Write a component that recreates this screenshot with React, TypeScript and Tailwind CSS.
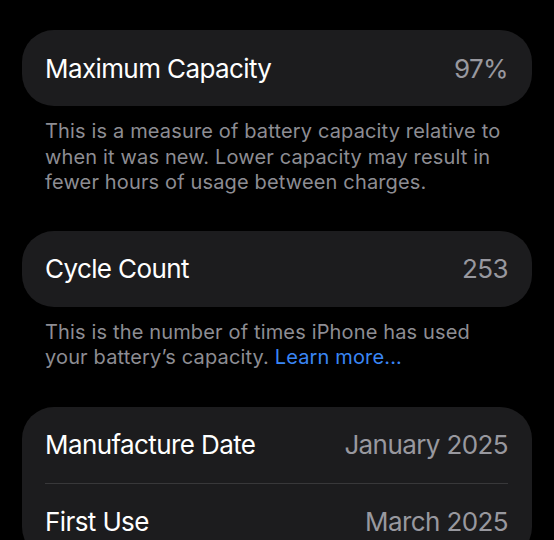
const rows = [
  { label: 'Manufacture Date', value: 'January 2025' },
  { label: 'First Use', value: 'March 2025' },
];

function Card({ label, value }: { label: string; value: string }) {
  return (
    <div className="h-[76px] rounded-[32px] bg-[#1c1c1e] flex items-center justify-between pl-[23px] pr-[24px]">
      <span className="text-[26px] text-white tracking-[-0.6px]">{label}</span>
      <span className="text-[26px] text-[#98989f] tracking-[-0.6px]">{value}</span>
    </div>
  );
}

export default function App() {
  return (
    <div
      className="h-[540px] w-[554px] overflow-hidden bg-black px-[22px] pt-[30px] text-white"
      style={{ fontFamily: 'Inter, "Noto Sans", sans-serif' }}
    >
      <section>
        <Card label="Maximum Capacity" value="97%" />
        <p className="mt-[13px] pl-[23px] pr-[20px] text-[20px] leading-[25.5px] text-[#8d8d93] tracking-[0.15px]">
          This is a measure of battery capacity relative to when it was new. Lower capacity may result in
          fewer hours of usage between charges.
        </p>
      </section>

      <section className="mt-[35px]">
        <Card label="Cycle Count" value="253" />
        <p className="mt-[13px] pl-[23px] pr-[20px] text-[20px] leading-[25.5px] text-[#8d8d93] tracking-[0.15px]">
          This is the number of times iPhone has used your battery’s capacity.{' '}
          <a className="text-[#3a86f5]">Learn more...</a>
        </p>
      </section>

      <section className="mt-[36px] rounded-[32px] bg-[#1c1c1e] pl-[23px] pr-[24px]">
        {rows.map((row, i) => (
          <div
            key={row.label}
            className={`h-[76px] flex items-center justify-between ${i > 0 ? 'border-t border-[#38383a]' : ''}`}
          >
            <span className="text-[26px] text-white tracking-[-0.6px]">{row.label}</span>
            <span className="text-[26px] text-[#98989f] tracking-[-0.6px]">{row.value}</span>
          </div>
        ))}
      </section>
    </div>
  );
}
